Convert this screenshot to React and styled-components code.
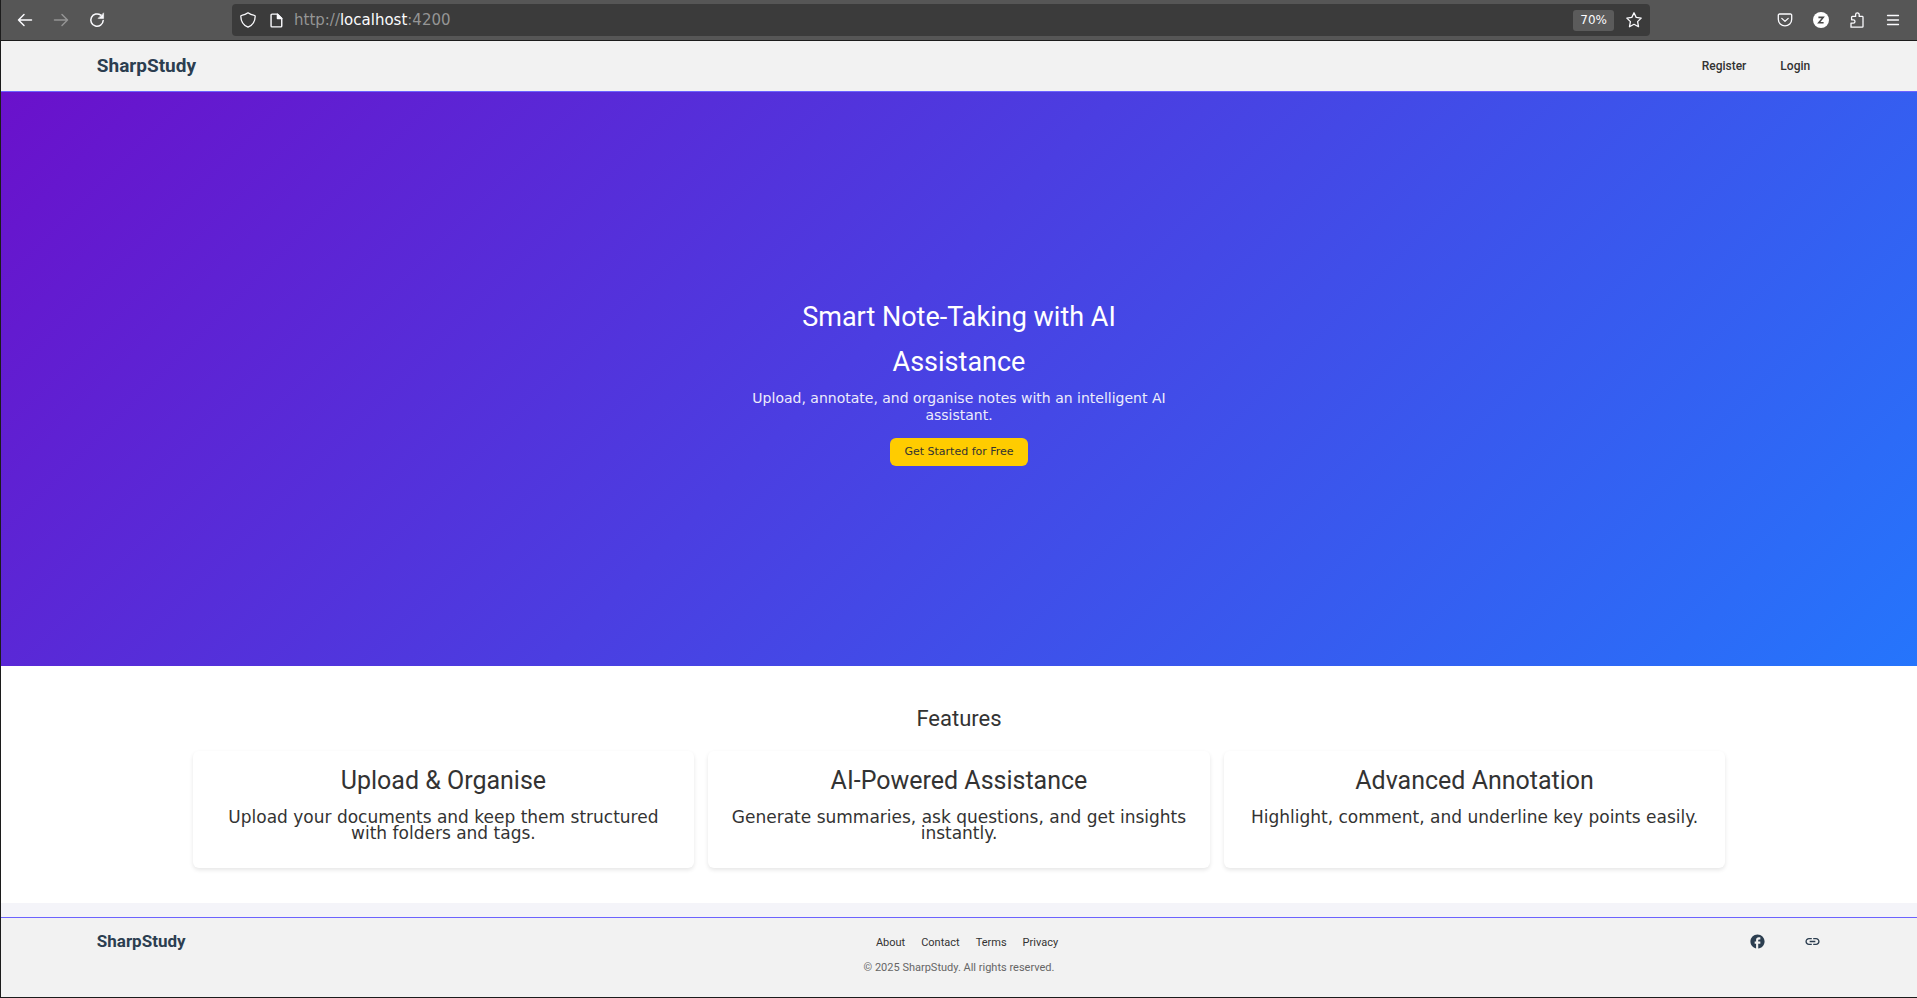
import React from 'react';
import styled, { createGlobalStyle } from 'styled-components';

const roboto = "Roboto, 'Open Sans', sans-serif";
const dejavu = "'DejaVu Sans', sans-serif";

const GlobalStyle = createGlobalStyle`
  *, *::before, *::after { box-sizing: border-box; }
  body { margin: 0; background: #f4f4f9; color: #333; font-family: ${dejavu}; }
  h1, h2, h3, p { margin: 0; font-weight: 400; }
  a { color: inherit; text-decoration: none; }
  svg { display: block; }
`;

const BrowserWindow = styled.div`
  display: flex;
  flex-direction: column;
  min-height: 100vh;
  border-left: 1px solid #1c1c1c;
  border-bottom: 1px solid #1c1c1c;
`;

const Toolbar = styled.div`
  display: flex;
  align-items: center;
  height: 41px;
  padding: 0 9px;
  background: #565656;
  border-bottom: 1px solid #1c1c1c;
`;

const ToolGroup = styled.div`
  display: flex;
  gap: 6px;
`;

const ToolButton = styled.button`
  display: flex;
  align-items: center;
  justify-content: center;
  width: 30px;
  height: 30px;
  padding: 0;
  border: 0;
  background: none;
  color: ${(p) => (p.disabled ? '#949494' : '#fbfbfe')};
`;

const AddressBar = styled.div`
  display: flex;
  flex: 1;
  align-items: center;
  height: 32px;
  margin: 0 120px;
  padding: 0 2px;
  border-radius: 4px;
  background: #3b3b3b;
`;

const SiteButton = styled(ToolButton)`
  width: 28px;
`;

const Address = styled.div`
  flex: 1;
  padding-left: 4px;
  color: #959595;
  font-size: 15px;
  line-height: 22px;
  white-space: nowrap;
`;

const Host = styled.span`
  color: #fbfbfe;
`;

const ZoomButton = styled.button`
  height: 21px;
  margin-right: 6px;
  padding: 0 7px;
  border: 0;
  border-radius: 3px;
  background: #5b5b5b;
  color: #fbfbfe;
  font: 12px/21px ${dejavu};
`;

const Header = styled.header`
  display: flex;
  align-items: center;
  justify-content: space-between;
  height: 51px;
  padding: 0 5%;
  background: #f2f2f2;
  border-bottom: 1px solid #6c63ff;
`;

const Brand = styled.a`
  color: #2c3e50;
  font-family: ${roboto};
  font-size: ${(p) => (p.$small ? 17 : 19)}px;
  font-weight: 700;
  line-height: ${(p) => (p.$small ? 22 : 24)}px;
`;

const HeaderNav = styled.nav`
  display: flex;
  gap: 12px;
`;

const HeaderLink = styled.a`
  padding: 0 11px;
  font-family: ${roboto};
  font-size: 12px;
  font-weight: 500;
  line-height: 24px;
`;

const Hero = styled.section`
  display: flex;
  flex-direction: column;
  align-items: center;
  justify-content: center;
  min-height: calc(round(60vh, 1px) - 25px);
  background: linear-gradient(135deg, #6a11cb, #2575fc);
  color: #fff;
  text-align: center;
`;

const HeroTitle = styled.h1`
  max-width: 420px;
  padding-top: 2px;
  margin-bottom: 5px;
  font-family: ${roboto};
  font-size: 27px;
  line-height: 45px;
`;

const HeroText = styled.p`
  max-width: 420px;
  margin-bottom: 14px;
  font-size: 14px;
  line-height: 17px;
  opacity: 0.9;
`;

const StartButton = styled.button`
  height: 28px;
  padding: 0 14px;
  border: 0;
  border-radius: 6px;
  background: #fc0;
  color: #333;
  font: 11px/17px ${dejavu};
`;

const Features = styled.section`
  padding: 35px 10%;
  background: #fff;
  text-align: center;
`;

const FeaturesTitle = styled.h2`
  margin-bottom: 14px;
  font-family: ${roboto};
  font-size: 22px;
  line-height: 36px;
`;

const CardGrid = styled.div`
  display: grid;
  grid-template-columns: repeat(3, 1fr);
  gap: 14px;
`;

const Card = styled.article`
  padding: 14px 18px 27px;
  border-radius: 6px;
  background: #fff;
  box-shadow: 0 2px 4px rgba(0, 0, 0, 0.1);
`;

const CardTitle = styled.h3`
  margin-bottom: 12px;
  font-family: ${roboto};
  font-size: 25px;
  line-height: 32px;
`;

const CardText = styled.p`
  font-size: 17px;
  line-height: 16px;
`;

const Footer = styled.footer`
  display: grid;
  flex: 1;
  grid-template-columns: 1fr auto 1fr;
  align-items: start;
  margin-top: 14px;
  padding: 12px 5%;
  background: #f2f2f2;
  border-top: 1px solid #6c63ff;
  font-family: ${roboto};
`;

const FooterBrand = styled.div`
  display: flex;
`;

const FooterCenter = styled.div`
  text-align: center;
`;

const FooterLinks = styled.nav`
  display: flex;
  justify-content: center;
`;

const FooterLink = styled.a`
  margin-left: 16px;
  font-size: 11px;
  line-height: 25px;
`;

const Copyright = styled.p`
  color: #666;
  font-size: 11px;
  line-height: 25px;
`;

const Social = styled.div`
  display: flex;
  justify-content: flex-end;
  gap: 38px;
  color: #2c3e50;
`;

const SocialLink = styled.a`
  display: flex;
  align-items: center;
  height: 22px;
`;

const Stroke = ({ size = 16, width = 1.5, children }) => (
  <svg
    width={size}
    height={size}
    viewBox="0 0 16 16"
    fill="none"
    stroke="currentColor"
    strokeWidth={width}
    strokeLinecap="round"
    strokeLinejoin="round"
    aria-hidden="true"
  >
    {children}
  </svg>
);

const ArrowIcon = ({ forward }) => (
  <Stroke>
    {forward ? <path d="M1.5 8h13M9 2.5 14.5 8 9 13.5" /> : <path d="M14.5 8h-13M7 2.5 1.5 8 7 13.5" />}
  </Stroke>
);

const ReloadIcon = () => (
  <Stroke>
    <path d="M11.8 3.2A6.2 6.2 0 1 0 14.2 8.5" />
    <path d="M14.6 1.2v5.2H9.4z" fill="currentColor" strokeWidth="0.6" />
  </Stroke>
);

const ShieldIcon = () => (
  <Stroke width={1.3}>
    <path d="M8 .8c1.8 1.5 4.2 2.3 6.4 2.5.5 0 .8.4.8.9-.1 5.300-2.500 9-7.200 11C3.300 13.200.9 9.500.8 4.200c0-.5.300-.9.800-.9C3.800 3.100 6.200 2.300 8 .8z" />
  </Stroke>
);

const PageIcon = () => (
  <Stroke size={15} width={1.5}>
    <path d="M3.200 1.200h5.800l4.600 4.600v8a1 1 0 0 1-1 1H3.200a1 1 0 0 1-1-1V2.200a1 1 0 0 1 1-1z" />
    <path d="M9 1.200v4.600h4.600z" fill="currentColor" />
  </Stroke>
);

const StarIcon = () => (
  <Stroke width={1.3}>
    <path d="M8 .8l2.200 4.600 5 .7-3.600 3.500.9 5.100L8 12.300l-4.500 2.400.9-5.100L.8 6.100l5-.7z" />
  </Stroke>
);

const PocketIcon = () => (
  <Stroke width={1.3}>
    <path d="M2.500 2h11a1.200 1.200 0 0 1 1.200 1.200v4a6.700 6.700 0 0 1-13.400 0v-4A1.200 1.200 0 0 1 2.500 2z" />
    <path d="M4.800 6.400 8 9.400l3.200-3" />
  </Stroke>
);

const ZoteroIcon = () => (
  <svg width="16" height="16" viewBox="0 0 16 16" aria-hidden="true">
    <circle cx="8" cy="8" r="8" fill="#fff" />
    <path d="M5.400 5.400h4.800L5.800 10.800h4.800" fill="none" stroke="#484848" strokeWidth="1.600" />
  </svg>
);

const PuzzleIcon = () => (
  <Stroke width={1.3}>
    <path d="M2 15.200h11.200a.8.8 0 0 0 .8-.8V5.200a.8.8 0 0 0-.8-.8h-3V2.700a1.800 1.800 0 0 0-3.600 0v1.700H3.400a.8.8 0 0 0-.8.8v2.600h1.700a1.700 1.700 0 0 1 0 3.400H2z" />
  </Stroke>
);

const MenuIcon = () => (
  <Stroke width={1.3}>
    <path d="M2.500 3.500h11M2.500 8h11M2.500 12.500h11" />
  </Stroke>
);

const FacebookIcon = () => (
  <svg width="17" height="17" viewBox="0 0 24 24" fill="currentColor" aria-hidden="true">
    <path d="M22 12c0-5.520-4.480-10-10-10S2 6.480 2 12c0 4.840 3.440 8.870 8 9.800V15H8v-3h2V9.500C10 7.570 11.570 6 13.500 6H16v3h-2c-.55 0-1 .45-1 1v2h3v3h-3v6.950c5.050-.5 9-4.760 9-9.950z" />
  </svg>
);

const LinkIcon = () => (
  <svg width="17" height="17" viewBox="0 0 24 24" fill="currentColor" aria-hidden="true">
    <path d="M3.900 12c0-1.710 1.390-3.100 3.100-3.100h4V7H7c-2.760 0-5 2.240-5 5s2.240 5 5 5h4v-1.900H7c-1.710 0-3.100-1.390-3.100-3.100zM8 13h8v-2H8v2zm9-6h-4v1.900h4c1.710 0 3.100 1.390 3.100 3.100s-1.390 3.100-3.100 3.100h-4V17h4c2.760 0 5-2.240 5-5s-2.240-5-5-5z" />
  </svg>
);

const features = [
  { title: 'Upload & Organise', text: 'Upload your documents and keep them structured with folders and tags.' },
  { title: 'AI-Powered Assistance', text: 'Generate summaries, ask questions, and get insights instantly.' },
  { title: 'Advanced Annotation', text: 'Highlight, comment, and underline key points easily.' },
];

export default function App() {
  return (
    <>
      <GlobalStyle />
      <BrowserWindow>
        <Toolbar>
          <ToolGroup>
            <ToolButton aria-label="Back"><ArrowIcon /></ToolButton>
            <ToolButton aria-label="Forward" disabled><ArrowIcon forward /></ToolButton>
            <ToolButton aria-label="Reload"><ReloadIcon /></ToolButton>
          </ToolGroup>
          <AddressBar>
            <SiteButton aria-label="Tracking protection"><ShieldIcon /></SiteButton>
            <SiteButton aria-label="Site information"><PageIcon /></SiteButton>
            <Address role="textbox" aria-label="Address" contentEditable suppressContentEditableWarning spellCheck={false}>
              http://<Host>localhost</Host>:4200
            </Address>
            <ZoomButton>70%</ZoomButton>
            <SiteButton aria-label="Bookmark this page"><StarIcon /></SiteButton>
          </AddressBar>
          <ToolGroup>
            <ToolButton aria-label="Save to Pocket"><PocketIcon /></ToolButton>
            <ToolButton aria-label="Zotero"><ZoteroIcon /></ToolButton>
            <ToolButton aria-label="Extensions"><PuzzleIcon /></ToolButton>
            <ToolButton aria-label="Menu"><MenuIcon /></ToolButton>
          </ToolGroup>
        </Toolbar>

        <Header>
          <Brand href="#home">SharpStudy</Brand>
          <HeaderNav>
            <HeaderLink href="#register">Register</HeaderLink>
            <HeaderLink href="#login">Login</HeaderLink>
          </HeaderNav>
        </Header>

        <main>
          <Hero>
            <HeroTitle>Smart Note-Taking with AI Assistance</HeroTitle>
            <HeroText>Upload, annotate, and organise notes with an intelligent AI assistant.</HeroText>
            <StartButton>Get Started for Free</StartButton>
          </Hero>
          <Features>
            <FeaturesTitle>Features</FeaturesTitle>
            <CardGrid>
              {features.map((feature) => (
                <Card key={feature.title}>
                  <CardTitle>{feature.title}</CardTitle>
                  <CardText>{feature.text}</CardText>
                </Card>
              ))}
            </CardGrid>
          </Features>
        </main>

        <Footer>
          <FooterBrand>
            <Brand href="#home" $small>SharpStudy</Brand>
          </FooterBrand>
          <FooterCenter>
            <FooterLinks>
              <FooterLink href="#about">About</FooterLink>
              <FooterLink href="#contact">Contact</FooterLink>
              <FooterLink href="#terms">Terms</FooterLink>
              <FooterLink href="#privacy">Privacy</FooterLink>
            </FooterLinks>
            <Copyright>© 2025 SharpStudy. All rights reserved.</Copyright>
          </FooterCenter>
          <Social>
            <SocialLink href="#facebook" aria-label="Facebook"><FacebookIcon /></SocialLink>
            <SocialLink href="#link" aria-label="Website"><LinkIcon /></SocialLink>
          </Social>
        </Footer>
      </BrowserWindow>
    </>
  );
}
